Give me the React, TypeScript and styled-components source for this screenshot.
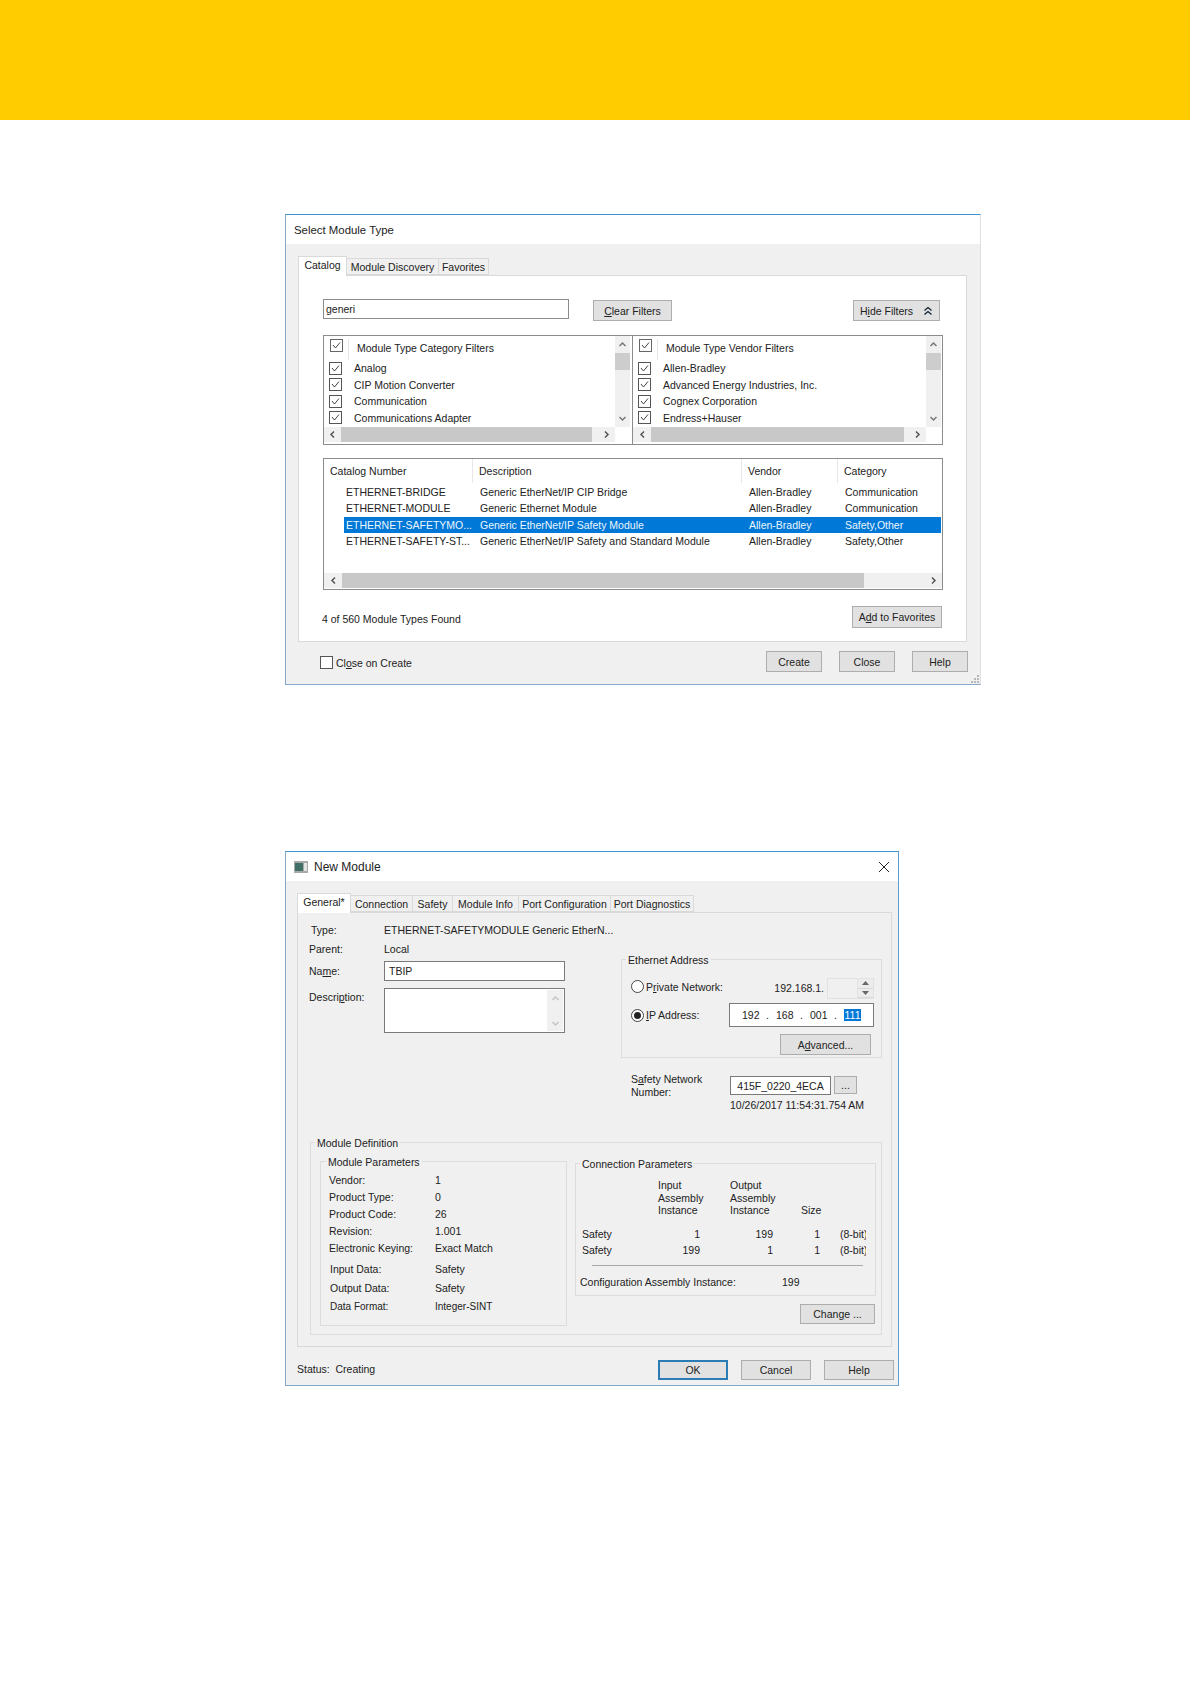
import { ReactNode } from "react"
import styled, { createGlobalStyle } from "styled-components"

const GlobalStyle = createGlobalStyle`
  html, body {
    margin: 0;
    padding: 0;
    background: #fff;
  }
  * {
    box-sizing: border-box;
  }
  u {
    text-underline-offset: 1px;
  }
`

const Page = styled.div`
  width: 1190px;
  height: 1684px;
  overflow: hidden;
  display: flex;
  flex-direction: column;
  font-family: "Liberation Sans", Arial, sans-serif;
  font-size: 10.5px;
  color: #222;
  white-space: nowrap;
`

const Banner = styled.div`
  height: 120px;
  flex: none;
  background: #ffcc00;
`

const Window = styled.section<{ $width: number; $height: number; $top: number; $right: string }>`
  position: relative;
  flex: none;
  width: ${(p) => p.$width}px;
  height: ${(p) => p.$height}px;
  margin: ${(p) => p.$top}px 0 0 285px;
  display: flex;
  flex-direction: column;
  background: #f0f0f0;
  border: 1px solid #86a9cb;
  border-top-color: #3d94d3;
  border-right-color: ${(p) => p.$right};
`

const TitleBar = styled.header<{ $pad: number; $size: number }>`
  height: 29px;
  flex: none;
  display: flex;
  align-items: center;
  gap: 6px;
  padding: 0 8px 0 ${(p) => p.$pad}px;
  background: #fff;
  font-size: ${(p) => p.$size}px;
`

const CloseGlyph = styled.svg`
  margin-left: auto;
  width: 12px;
  height: 12px;
`

const TabStrip = styled.div<{ $top: number; $left: number }>`
  flex: none;
  display: flex;
  align-items: flex-end;
  margin: ${(p) => p.$top}px 0 0 ${(p) => p.$left}px;
`

const Tab = styled.div<{ $width: number; $active?: boolean }>`
  width: ${(p) => p.$width}px;
  height: ${(p) => (p.$active ? 20 : 17)}px;
  margin-bottom: ${(p) => (p.$active ? -1 : 0)}px;
  position: relative;
  z-index: ${(p) => (p.$active ? 2 : 1)};
  display: flex;
  align-items: center;
  justify-content: center;
  padding-bottom: ${(p) => (p.$active ? 3 : 0)}px;
  background: ${(p) => (p.$active ? "#fff" : "#f0f0f0")};
  border: 1px solid #d9d9d9;
  border-bottom: ${(p) => (p.$active ? "0" : "1px solid #d9d9d9")};
  border-left-width: ${(p) => (p.$active ? 1 : 0)}px;
`

const TabPanel = styled.div<{ $left: number; $width: number; $height: number; $bg: string }>`
  flex: none;
  margin-left: ${(p) => p.$left}px;
  width: ${(p) => p.$width}px;
  height: ${(p) => p.$height}px;
  background: ${(p) => p.$bg};
  border: 1px solid #d9d9d9;
`

const CatalogContent = styled.div`
  display: flex;
  flex-direction: column;
  padding: 23px 23px 0 24px;
`

const SearchRow = styled.div`
  display: flex;
  align-items: flex-end;
  height: 22px;
`

const SearchInput = styled.div`
  align-self: flex-start;
  width: 246px;
  height: 20px;
  padding-left: 2px;
  line-height: 18px;
  background: #fff;
  border: 1px solid #8c8c8c;
`

const Btn = styled.div<{ $w: number; $h: number; $default?: boolean; $gap?: number }>`
  flex: none;
  width: ${(p) => p.$w}px;
  height: ${(p) => p.$h}px;
  margin-right: ${(p) => p.$gap || 0}px;
  display: flex;
  align-items: center;
  justify-content: center;
  gap: 10px;
  background: #e1e1e1;
  border: ${(p) => (p.$default ? "2px solid #2b7cb5" : "1px solid #adadad")};
`

const SearchGap = styled.div<{ $auto?: boolean }>`
  flex: ${(p) => (p.$auto ? 1 : "none")};
  width: 24px;
`

const FilterBox = styled.div`
  margin-top: 14px;
  height: 110px;
  display: flex;
  background: #fff;
  border: 1px solid #8c8c8c;
`

const FilterPane = styled.div<{ $width: number; $pad: number; $divider?: boolean }>`
  flex: none;
  width: ${(p) => p.$width}px;
  display: flex;
  flex-direction: column;
  padding-right: ${(p) => p.$pad}px;
  border-right: ${(p) => (p.$divider ? "1px solid #8c8c8c" : "0")};
`

const FilterBody = styled.div`
  height: 91px;
  display: flex;
`

const FilterList = styled.div`
  flex: 1;
  min-width: 0;
`

const FilterHeader = styled.div`
  height: 24px;
  display: flex;
  align-items: flex-start;
  padding: 3px 0 0 6px;
`

const FilterHeaderLabel = styled.div`
  height: 21px;
  margin-left: 5px;
  padding: 3px 0 0 8px;
  border-left: 1px solid #e6e6e6;
`

const FilterRow = styled.div`
  height: 16.5px;
  display: flex;
  align-items: center;
  gap: 12px;
  padding-left: 5px;
`

const CheckBox = styled.span<{ $tone?: string }>`
  flex: none;
  width: 13px;
  height: 13px;
  display: flex;
  background: #fff;
  border: 1px solid ${(p) => p.$tone || "#555"};
`

const ScrollV = styled.div`
  flex: none;
  width: 15px;
  display: flex;
  flex-direction: column;
  background: #f0f0f0;
`

const ScrollH = styled.div<{ $gutter?: number }>`
  flex: none;
  height: 15px;
  display: flex;
  margin-right: ${(p) => p.$gutter || 0}px;
  background: #f0f0f0;
`

const ScrollArrow = styled.div<{ $size: number; $vertical?: boolean }>`
  flex: none;
  width: ${(p) => (p.$vertical ? "100%" : `${p.$size}px`)};
  height: ${(p) => (p.$vertical ? `${p.$size}px` : "100%")};
  display: flex;
  align-items: center;
  justify-content: center;
`

const ThumbH = styled.div<{ $width: number }>`
  flex: none;
  width: ${(p) => p.$width}px;
  background: #c8c8c8;
`

const ThumbV = styled.div`
  flex: none;
  height: 17px;
  background: #cdcdcd;
`

const Filler = styled.div`
  flex: 1;
`

const CatalogTable = styled.div`
  margin-top: 13px;
  height: 132px;
  display: flex;
  flex-direction: column;
  padding-bottom: 1px;
  background: #fff;
  border: 1px solid #8c8c8c;
`

const TableHead = styled.div`
  flex: none;
  height: 25px;
  display: grid;
  grid-template-columns: 149px 269px 96px 1fr;
`

const HeadCell = styled.div<{ $rule?: boolean }>`
  height: 24px;
  padding: 6px 0 0 6px;
  border-right: ${(p) => (p.$rule ? "1px solid #e6e6e6" : "0")};
`

const TableRows = styled.div`
  flex: 1;
`

const TableRow = styled.div<{ $selected?: boolean }>`
  height: 16.3px;
  margin: 0 1px 0 20px;
  display: grid;
  grid-template-columns: 129px 269px 96px 1fr;
  align-items: center;
  background: ${(p) => (p.$selected ? "#0078d7" : "transparent")};
  color: ${(p) => (p.$selected ? "#eef6fc" : "#222")};
`

const RowCell = styled.div<{ $first?: boolean }>`
  padding-left: ${(p) => (p.$first ? 2 : 7)}px;
  overflow: hidden;
`

const ResultRow = styled.div`
  margin-top: 16px;
  display: flex;
  align-items: center;
  justify-content: space-between;
  padding-right: 1px;
  height: 22px;
`

const FoundText = styled.span`
  margin: 4px 0 0 -1px;
`

const FooterRow = styled.div<{ $pad: string; $gap: number }>`
  flex: 1;
  display: flex;
  align-items: flex-start;
  gap: ${(p) => p.$gap}px;
  padding: ${(p) => p.$pad};
`

const CloseOption = styled.div`
  display: flex;
  align-items: center;
  gap: 3px;
  margin: 5px auto 0 0;
`

const ResizeGrip = styled.svg`
  position: absolute;
  right: 0;
  bottom: 0;
  width: 10px;
  height: 10px;
`

const ModuleContent = styled.div`
  display: flex;
  flex-direction: column;
  padding: 0 0 0 11px;
`

const TopSection = styled.div`
  height: 229px;
  display: flex;
`

const GeneralColumn = styled.div`
  flex: none;
  width: 312px;
  padding-top: 9px;
`

const FieldRow = styled.div<{ $height: number; $top?: number; $inset?: number; $align?: string }>`
  height: ${(p) => p.$height}px;
  margin-top: ${(p) => p.$top || 0}px;
  padding-left: ${(p) => p.$inset || 0}px;
  display: grid;
  grid-template-columns: ${(p) => 75 - (p.$inset || 0)}px 1fr;
  align-items: ${(p) => p.$align || "center"};
`

const DescriptionLabel = styled.span`
  padding-top: 3px;
`

const TextField = styled.div`
  width: 181px;
  height: 100%;
  padding-left: 4px;
  display: flex;
  align-items: center;
  background: #fff;
  border: 1px solid #7a7a7a;
`

const MemoField = styled.div`
  width: 181px;
  height: 100%;
  display: flex;
  justify-content: flex-end;
  background: #fff;
  border: 1px solid #7a7a7a;
`

const MemoScroll = styled.div`
  width: 16px;
  margin: 1px 1px 1px 0;
  display: flex;
  flex-direction: column;
  justify-content: space-between;
  background: #f0f0f0;
`

const EthernetColumn = styled.div`
  flex: none;
  width: 261px;
  padding-top: 46px;
`

const GroupBox = styled.div<{ $height: number; $pad: string; $width?: number }>`
  position: relative;
  flex: none;
  width: ${(p) => (p.$width ? `${p.$width}px` : "auto")};
  height: ${(p) => p.$height}px;
  padding: ${(p) => p.$pad};
  border: 1px solid #dcdcdc;
`

const Legend = styled.span<{ $left: number }>`
  position: absolute;
  top: -6px;
  left: ${(p) => p.$left}px;
  padding: 0 2px;
  line-height: 13px;
  background: #f0f0f0;
`

const AddressRow = styled.div<{ $height: number; $top?: number }>`
  height: ${(p) => p.$height}px;
  margin-top: ${(p) => p.$top || 0}px;
  display: flex;
  align-items: center;
`

const RadioLabel = styled.div<{ $lift?: number }>`
  display: flex;
  align-items: center;
  gap: 2px;
  margin-bottom: ${(p) => p.$lift || 0}px;
`

const Radio = styled.span`
  width: 13px;
  height: 13px;
  display: flex;
  align-items: center;
  justify-content: center;
  background: #fff;
  border-radius: 50%;
  border: 1px solid #444;
`

const RadioDot = styled.span`
  width: 7px;
  height: 7px;
  border-radius: 50%;
  background: #222;
`

const NetworkPrefix = styled.span`
  margin: 0 3px 2px auto;
`

const SpinField = styled.div`
  width: 47px;
  height: 21px;
  display: flex;
  justify-content: flex-end;
  border: 1px solid #e2e2e2;
`

const SpinButtons = styled.div`
  width: 16px;
  display: flex;
  flex-direction: column;
  border-left: 1px solid #e2e2e2;
`

const SpinButton = styled.div`
  flex: 1;
  display: flex;
  align-items: center;
  justify-content: center;
  border-bottom: 1px solid #d8d8d8;
  background: #ececec;
`

const IpField = styled.div`
  margin-left: auto;
  width: 145px;
  height: 24px;
  padding-left: 12px;
  display: flex;
  align-items: center;
  background: #fff;
  border: 1px solid #7a7a7a;
`

const IpOctet = styled.span<{ $selected?: boolean }>`
  width: 17px;
  text-align: center;
  background: ${(p) => (p.$selected ? "#0078d7" : "transparent")};
  color: ${(p) => (p.$selected ? "#fff" : "#222")};
`

const IpDot = styled.span`
  width: 17px;
  text-align: center;
`

const AdvancedRow = styled.div`
  margin: 7px 3px 0 0;
  display: flex;
  justify-content: flex-end;
`

const SafetyBlock = styled.div`
  margin-top: 15px;
  padding-left: 10px;
  display: grid;
  grid-template-columns: 99px 1fr;
  row-gap: 3px;
`

const SafetyLabel = styled.div`
  line-height: 13px;
  white-space: pre-line;
`

const SafetyControls = styled.div`
  display: flex;
  align-items: flex-start;
  gap: 3px;
  padding-top: 3px;
`

const SafetyNumber = styled.div`
  width: 101px;
  height: 19px;
  display: flex;
  align-items: center;
  justify-content: center;
  background: #fff;
  border: 1px solid #7a7a7a;
`

const Stamp = styled.div`
  grid-column: 2;
  margin-top: -3px;
`

const DefinitionWrap = styled.div`
  width: 572px;
  margin-left: 1px;
`

const DefinitionGrid = styled.div`
  display: flex;
  gap: 8px;
`

const ConnectionColumn = styled.div`
  flex: none;
  width: 301px;
  padding-top: 2px;
  display: flex;
  flex-direction: column;
`

const ParamRow = styled.div<{ $height: number; $top?: number; $inset?: number; $small?: boolean }>`
  height: ${(p) => p.$height}px;
  margin-top: ${(p) => p.$top || 0}px;
  padding-left: ${(p) => p.$inset || 0}px;
  display: grid;
  grid-template-columns: ${(p) => 106 - (p.$inset || 0)}px 1fr;
  align-items: center;
  font-size: ${(p) => (p.$small ? 10 : 10.5)}px;
`

const ConnectionHead = styled.div`
  display: grid;
  grid-template-columns: 76px 72px 71px 1fr;
  line-height: 12.5px;
  white-space: pre-line;
  align-items: end;
`

const ConnectionRows = styled.div`
  margin-top: 10px;
`

const ConnectionRow = styled.div`
  height: 15.5px;
  display: grid;
  grid-template-columns: 76px 42px 73px 47px 20px 26px;
  align-items: center;
`

const Numeric = styled.div`
  text-align: right;
`

const Clipped = styled.div`
  grid-column: 6;
  overflow: hidden;
`

const Rule = styled.div`
  height: 1px;
  margin: 7px 12px 0 10px;
  background: #a8a8a8;
`

const ConfigRow = styled.div`
  margin: 8px 0 0 -2px;
  height: 16px;
  display: grid;
  grid-template-columns: 202px 1fr;
  align-items: center;
`

const ChangeRow = styled.div`
  margin: 8px 1px 0 0;
  display: flex;
  justify-content: flex-end;
`

const StatusText = styled.span`
  margin: 3px auto 0 0;
`

type ArrowDir = "up" | "down" | "left" | "right"

const arrowPoints: Record<ArrowDir, string> = {
  up: "1.5,6 4.5,3 7.5,6",
  down: "1.5,3 4.5,6 7.5,3",
  left: "6,1.5 3,4.5 6,7.5",
  right: "3,1.5 6,4.5 3,7.5",
}

function Arrow({ dir, color = "#555" }: { dir: ArrowDir; color?: string }) {
  return (
    <svg width="9" height="9" viewBox="0 0 9 9">
      <polyline points={arrowPoints[dir]} fill="none" stroke={color} strokeWidth="1.5" />
    </svg>
  )
}

function Check({ tone }: { tone?: string }) {
  return (
    <CheckBox $tone={tone}>
      <svg width="11" height="11" viewBox="0 0 11 11">
        <polyline points="2,5 4.5,8 9,2.5" fill="none" stroke="#444" strokeWidth="1" />
      </svg>
    </CheckBox>
  )
}

function HorizontalScroll({ lead, thumb, gutter }: { lead: number; thumb: number; gutter?: number }) {
  return (
    <ScrollH $gutter={gutter}>
      <ScrollArrow $size={lead}>
        <Arrow dir="left" />
      </ScrollArrow>
      <ThumbH $width={thumb} />
      <Filler />
      <ScrollArrow $size={17}>
        <Arrow dir="right" />
      </ScrollArrow>
    </ScrollH>
  )
}

function VerticalScroll() {
  return (
    <ScrollV>
      <ScrollArrow $size={17} $vertical>
        <Arrow dir="up" color="#777" />
      </ScrollArrow>
      <ThumbV />
      <Filler />
      <ScrollArrow $size={17} $vertical>
        <Arrow dir="down" color="#777" />
      </ScrollArrow>
    </ScrollV>
  )
}

function Filters({ title, rows }: { title: string; rows: string[] }) {
  return (
    <FilterBody>
      <FilterList>
        <FilterHeader>
          <Check tone="#666" />
          <FilterHeaderLabel>{title}</FilterHeaderLabel>
        </FilterHeader>
        {rows.map((row) => (
          <FilterRow key={row}>
            <Check />
            {row}
          </FilterRow>
        ))}
      </FilterList>
      <VerticalScroll />
    </FilterBody>
  )
}

const catalogRows = [
  ["ETHERNET-BRIDGE", "Generic EtherNet/IP CIP Bridge", "Allen-Bradley", "Communication"],
  ["ETHERNET-MODULE", "Generic Ethernet Module", "Allen-Bradley", "Communication"],
  ["ETHERNET-SAFETYMO...", "Generic EtherNet/IP Safety Module", "Allen-Bradley", "Safety,Other"],
  ["ETHERNET-SAFETY-ST...", "Generic EtherNet/IP Safety and Standard Module", "Allen-Bradley", "Safety,Other"],
]

const connectionRows = [
  ["1", "199"],
  ["199", "1"],
]

function SelectModuleType() {
  return (
    <Window $width={696} $height={471} $top={94} $right="#e0e0e0">
      <TitleBar $pad={8} $size={11.4}>Select Module Type</TitleBar>
      <TabStrip $top={12} $left={12}>
        <Tab $width={49} $active>Catalog</Tab>
        <Tab $width={92}>Module Discovery</Tab>
        <Tab $width={50}>Favorites</Tab>
      </TabStrip>
      <TabPanel $left={12} $width={669} $height={367} $bg="#fff">
        <CatalogContent>
          <SearchRow>
            <SearchInput>generi</SearchInput>
            <SearchGap />
            <Btn $w={79} $h={21}>
              <span><u>C</u>lear Filters</span>
            </Btn>
            <SearchGap $auto />
            <Btn $w={87} $h={21} $gap={3}>
              <span>H<u>i</u>de Filters</span>
              <svg width="10" height="10" viewBox="0 0 10 10">
                <polyline points="1.5,4.5 5,1.5 8.5,4.5" fill="none" stroke="#123" strokeWidth="1.3" />
                <polyline points="1.5,8.5 5,5.5 8.5,8.5" fill="none" stroke="#123" strokeWidth="1.3" />
              </svg>
            </Btn>
          </SearchRow>
          <FilterBox>
            <FilterPane $width={309} $pad={2} $divider>
              <Filters
                title="Module Type Category Filters"
                rows={["Analog", "CIP Motion Converter", "Communication", "Communications Adapter"]}
              />
              <HorizontalScroll lead={17} thumb={251} gutter={15} />
            </FilterPane>
            <FilterPane $width={309} $pad={1}>
              <Filters
                title="Module Type Vendor Filters"
                rows={["Allen-Bradley", "Advanced Energy Industries, Inc.", "Cognex Corporation", "Endress+Hauser"]}
              />
              <HorizontalScroll lead={18} thumb={253} gutter={15} />
            </FilterPane>
          </FilterBox>
          <CatalogTable>
            <TableHead>
              <HeadCell $rule>Catalog Number</HeadCell>
              <HeadCell $rule>Description</HeadCell>
              <HeadCell $rule>Vendor</HeadCell>
              <HeadCell>Category</HeadCell>
            </TableHead>
            <TableRows>
              {catalogRows.map((row, i) => (
                <TableRow key={row[0]} $selected={i === 2}>
                  <RowCell $first>{row[0]}</RowCell>
                  <RowCell>{row[1]}</RowCell>
                  <RowCell>{row[2]}</RowCell>
                  <RowCell>{row[3]}</RowCell>
                </TableRow>
              ))}
            </TableRows>
            <HorizontalScroll lead={18} thumb={522} />
          </CatalogTable>
          <ResultRow>
            <FoundText>4 of 560 Module Types Found</FoundText>
            <Btn $w={90} $h={22}>
              <span>A<u>d</u>d to Favorites</span>
            </Btn>
          </ResultRow>
        </CatalogContent>
      </TabPanel>
      <FooterRow $pad="9px 12px 0 34px" $gap={17}>
        <CloseOption>
          <CheckBox />
          <span>Cl<u>o</u>se on Create</span>
        </CloseOption>
        <Btn $w={56} $h={21}>Create</Btn>
        <Btn $w={56} $h={21}>Close</Btn>
        <Btn $w={56} $h={21}>Help</Btn>
      </FooterRow>
      <ResizeGrip viewBox="0 0 10 10">
        {[[7, 1], [4, 4], [7, 4], [1, 7], [4, 7], [7, 7]].map(([x, y]) => (
          <rect key={`${x}-${y}`} x={x} y={y} width="2" height="2" fill="#b8b8b8" />
        ))}
      </ResizeGrip>
    </Window>
  )
}

function Param({ label, value, top, inset, height = 17, small }: {
  label: ReactNode
  value: string
  top?: number
  inset?: number
  height?: number
  small?: boolean
}) {
  return (
    <ParamRow $height={height} $top={top} $inset={inset} $small={small}>
      <span>{label}</span>
      <span>{value}</span>
    </ParamRow>
  )
}

function NewModule() {
  return (
    <Window $width={614} $height={535} $top={166} $right="#5b9bd0">
      <TitleBar $pad={8} $size={12}>
        <svg width="14" height="12" viewBox="0 0 14 12">
          <rect x="0" y="0" width="14" height="12" fill="#a9a9a9" />
          <rect x="1" y="2" width="8" height="8" fill="#3f6f66" />
          <rect x="10" y="2" width="3" height="8" fill="#e4e4e4" />
        </svg>
        New Module
        <CloseGlyph viewBox="0 0 12 12">
          <path d="M1 1 L11 11 M11 1 L1 11" stroke="#222" strokeWidth="1" fill="none" />
        </CloseGlyph>
      </TitleBar>
      <TabStrip $top={12} $left={11}>
        <Tab $width={54} $active>General*</Tab>
        <Tab $width={62}>Connection</Tab>
        <Tab $width={40}>Safety</Tab>
        <Tab $width={66}>Module Info</Tab>
        <Tab $width={92}>Port Configuration</Tab>
        <Tab $width={83}>Port Diagnostics</Tab>
      </TabStrip>
      <TabPanel $left={11} $width={595} $height={435} $bg="#f0f0f0">
        <ModuleContent>
          <TopSection>
            <GeneralColumn>
              <FieldRow $height={16} $inset={2}>
                <span>Type:</span>
                <span>ETHERNET-SAFETYMODULE Generic EtherN...</span>
              </FieldRow>
              <FieldRow $height={16} $top={3}>
                <span>Parent:</span>
                <span>Local</span>
              </FieldRow>
              <FieldRow $height={20} $top={4}>
                <span>Na<u>m</u>e:</span>
                <TextField>TBIP</TextField>
              </FieldRow>
              <FieldRow $height={45} $top={7} $align="start">
                <DescriptionLabel>Descri<u>p</u>tion:</DescriptionLabel>
                <MemoField>
                  <MemoScroll>
                    <ScrollArrow $size={16} $vertical><Arrow dir="up" color="#c4c4c4" /></ScrollArrow>
                    <ScrollArrow $size={16} $vertical><Arrow dir="down" color="#c4c4c4" /></ScrollArrow>
                  </MemoScroll>
                </MemoField>
              </FieldRow>
            </GeneralColumn>
            <EthernetColumn>
              <GroupBox $height={99} $pad="18px 7px 0 9px">
                <Legend $left={4}>Ethernet Address</Legend>
                <AddressRow $height={21}>
                  <RadioLabel $lift={4}>
                    <Radio />
                    <span>P<u>r</u>ivate Network:</span>
                  </RadioLabel>
                  <NetworkPrefix>192.168.1.</NetworkPrefix>
                  <SpinField>
                    <SpinButtons>
                      <SpinButton>
                        <svg width="7" height="4" viewBox="0 0 7 4"><path d="M3.5 0 L7 4 L0 4 Z" fill="#666" /></svg>
                      </SpinButton>
                      <SpinButton>
                        <svg width="7" height="4" viewBox="0 0 7 4"><path d="M0 0 L7 0 L3.5 4 Z" fill="#666" /></svg>
                      </SpinButton>
                    </SpinButtons>
                  </SpinField>
                </AddressRow>
                <AddressRow $height={24} $top={4}>
                  <RadioLabel>
                    <Radio><RadioDot /></Radio>
                    <span><u>I</u>P Address:</span>
                  </RadioLabel>
                  <IpField>
                    <IpOctet>192</IpOctet>
                    <IpDot>.</IpDot>
                    <IpOctet>168</IpOctet>
                    <IpDot>.</IpDot>
                    <IpOctet>001</IpOctet>
                    <IpDot>.</IpDot>
                    <IpOctet $selected>111</IpOctet>
                  </IpField>
                </AddressRow>
                <AdvancedRow>
                  <Btn $w={91} $h={21}><span>A<u>d</u>vanced...</span></Btn>
                </AdvancedRow>
              </GroupBox>
              <SafetyBlock>
                <SafetyLabel>S<u>a</u>fety Network{"\n"}Number:</SafetyLabel>
                <SafetyControls>
                  <SafetyNumber>415F_0220_4ECA</SafetyNumber>
                  <Btn $w={23} $h={18}>...</Btn>
                </SafetyControls>
                <Stamp>10/26/2017 11:54:31.754 AM</Stamp>
              </SafetyBlock>
            </EthernetColumn>
          </TopSection>
          <DefinitionWrap>
            <GroupBox $height={193} $pad="18px 0 0 9px">
              <Legend $left={4}>Module Definition</Legend>
              <DefinitionGrid>
                <GroupBox $height={165} $width={247} $pad="9px 0 0 8px">
                  <Legend $left={5}>Module Parameters</Legend>
                  <Param label="Vendor:" value="1" />
                  <Param label="Product Type:" value="0" />
                  <Param label="Product Code:" value="26" />
                  <Param label="Revision:" value="1.001" />
                  <Param label="Electronic Keying:" value="Exact Match" />
                  <Param label="Input Data:" value="Safety" top={3} inset={1} height={19} />
                  <Param label="Output Data:" value="Safety" inset={1} height={19} />
                  <Param label="Data Format:" value="Integer-SINT" inset={1} height={19} small />
                </GroupBox>
                <ConnectionColumn>
                  <GroupBox $height={133} $pad="15px 0 0 6px">
                    <Legend $left={4}>Connection Parameters</Legend>
                    <ConnectionHead>
                      <span />
                      <span>Input{"\n"}Assembly{"\n"}Instance</span>
                      <span>Output{"\n"}Assembly{"\n"}Instance</span>
                      <span>Size</span>
                    </ConnectionHead>
                    <ConnectionRows>
                      {connectionRows.map(([input, output]) => (
                        <ConnectionRow key={input}>
                          <span>Safety</span>
                          <Numeric>{input}</Numeric>
                          <Numeric>{output}</Numeric>
                          <Numeric>1</Numeric>
                          <Clipped>(8-bit)</Clipped>
                        </ConnectionRow>
                      ))}
                    </ConnectionRows>
                    <Rule />
                    <ConfigRow>
                      <span>Configuration Assembly Instance:</span>
                      <span>199</span>
                    </ConfigRow>
                  </GroupBox>
                  <ChangeRow>
                    <Btn $w={75} $h={20}><span>Chan<u>g</u>e ...</span></Btn>
                  </ChangeRow>
                </ConnectionColumn>
              </DefinitionGrid>
            </GroupBox>
          </DefinitionWrap>
        </ModuleContent>
      </TabPanel>
      <FooterRow $pad="13px 4px 0 11px" $gap={13}>
        <StatusText>Status:&nbsp; Creating</StatusText>
        <Btn $w={70} $h={20} $default>OK</Btn>
        <Btn $w={70} $h={20}>Cancel</Btn>
        <Btn $w={70} $h={20}>Help</Btn>
      </FooterRow>
    </Window>
  )
}

export default function App() {
  return (
    <>
      <GlobalStyle />
      <Page>
        <Banner />
        <SelectModuleType />
        <NewModule />
      </Page>
    </>
  )
}
